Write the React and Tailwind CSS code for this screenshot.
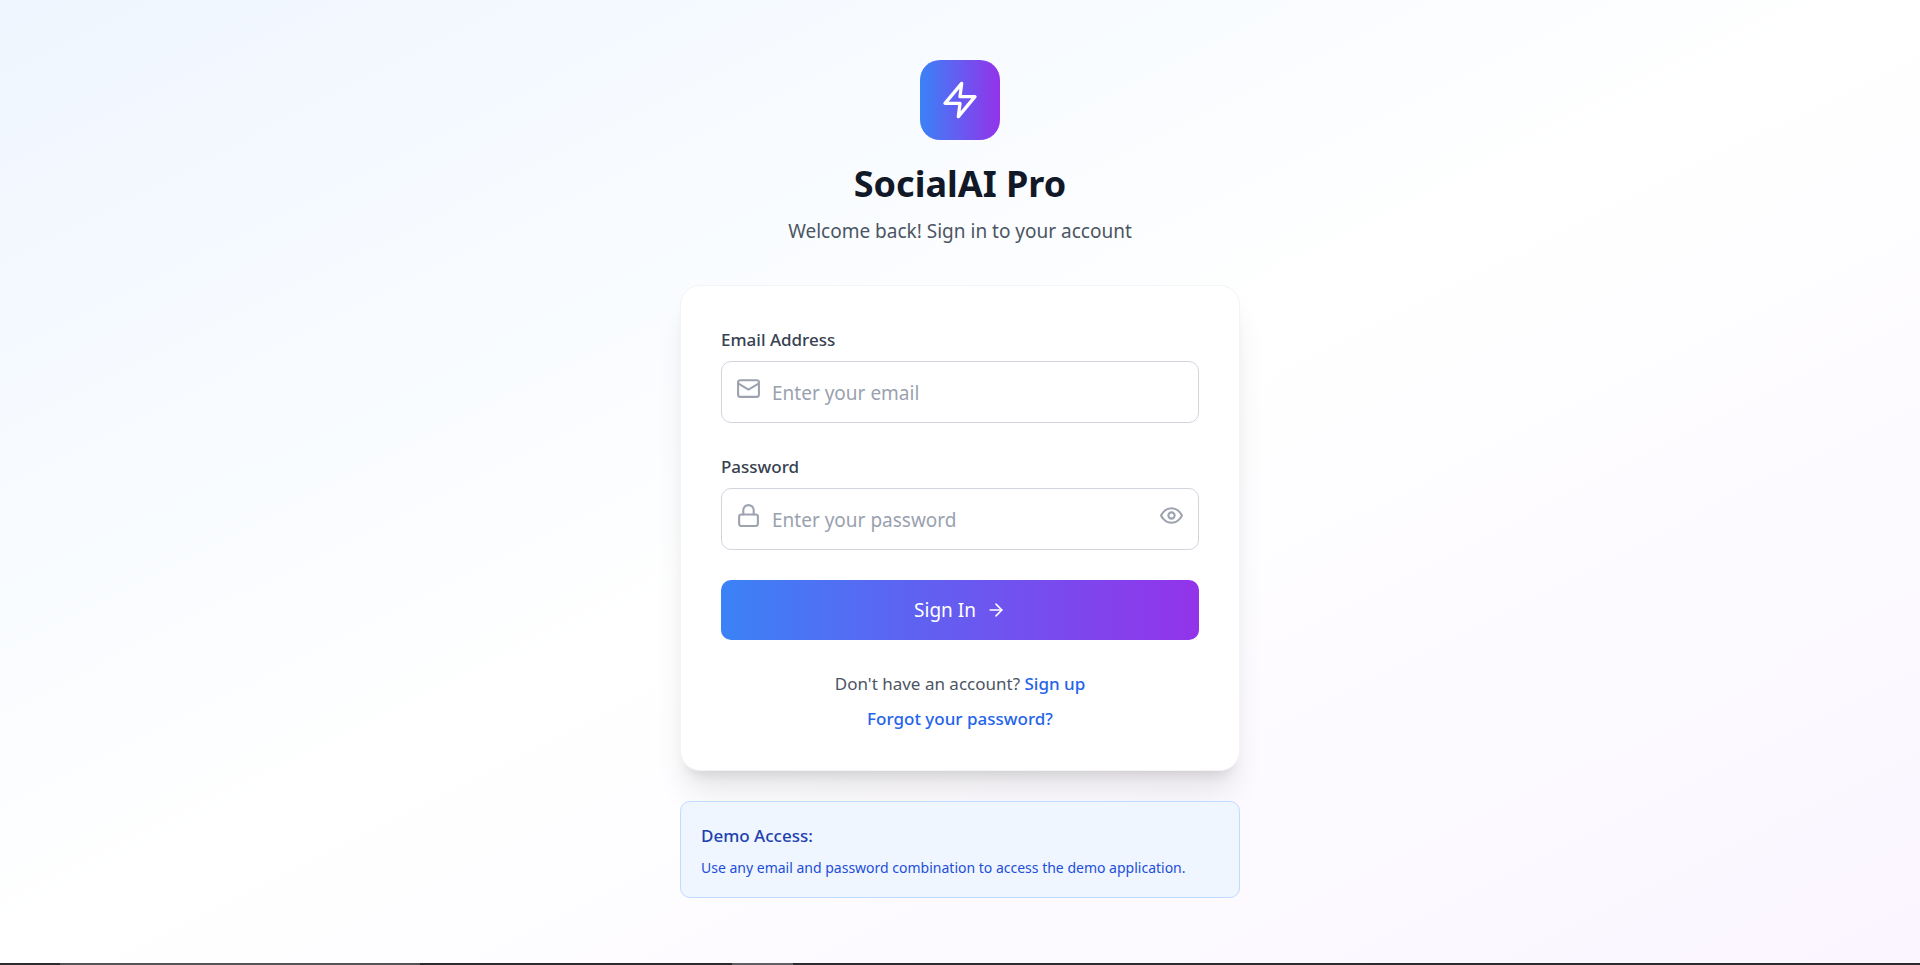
import { useState } from 'react'

const LABEL = 'block text-[17px] leading-[27px] font-medium text-[#374151] mb-2'
const FIELD =
  'block w-full h-[62px] border border-gray-300 rounded-[10px] pl-[50px] pt-[2px] text-[19px] text-gray-900 placeholder-gray-400 bg-white focus:outline-none focus:ring-2 focus:ring-blue-500'

function Icon({ className, children }) {
  return (
    <svg className={className} viewBox="0 0 24 24" fill="none" stroke="currentColor"
      strokeWidth="2" strokeLinecap="round" strokeLinejoin="round" aria-hidden="true">
      {children}
    </svg>
  )
}

export default function App() {
  const [form, setForm] = useState({ email: '', password: '' })
  const [showPassword, setShowPassword] = useState(false)

  const handleChange = (e) => setForm((f) => ({ ...f, [e.target.name]: e.target.value }))

  return (
    <div className="min-h-screen flex flex-col font-['Noto_Sans','Open_Sans',sans-serif]">
      <main className="flex-1 flex justify-center px-5 pt-15 pb-10 bg-linear-to-br/srgb from-[#eff6ff] via-white to-[#faf5ff]">
        <div className="w-full max-w-[560px]">
          {/* Header */}
          <header className="text-center mb-[38px]">
            <div className="size-20 mx-auto mb-5 flex items-center justify-center rounded-[20px] text-white bg-linear-to-r/srgb from-[#3b82f6] to-[#9333ea]">
              <Icon className="size-10">
                <polygon points="13 2 3 14 12 14 11 22 21 10 12 10 13 2" />
              </Icon>
            </div>
            <h1 className="text-[36px] leading-[48px] font-bold text-[#111827] mb-[7px]">SocialAI Pro</h1>
            <p className="text-[19px] leading-[32px] text-[#4b5563]">Welcome back! Sign in to your account</p>
          </header>

          {/* Card */}
          <div className="bg-white border border-[#f3f4f6] rounded-[20px] px-10 pt-10 pb-[38px] shadow-[0_25px_31px_-6px_rgba(0,0,0,0.1),0_10px_12px_-7px_rgba(0,0,0,0.1)]">
            <form onSubmit={(e) => e.preventDefault()} className="space-y-[30px]">
              <div>
                <label htmlFor="email" className={LABEL}>Email Address</label>
                <div className="relative">
                  <Icon className="absolute left-[15px] top-[15px] size-[25px] text-[#9ca3af]">
                    <rect x="2" y="4" width="20" height="16" rx="2" />
                    <path d="m22 7-10 6L2 7" />
                  </Icon>
                  <input id="email" name="email" type="email" value={form.email} onChange={handleChange}
                    placeholder="Enter your email" className={FIELD} />
                </div>
              </div>

              <div>
                <label htmlFor="password" className={LABEL}>Password</label>
                <div className="relative">
                  <Icon className="absolute left-[15px] top-[15px] size-[25px] text-[#9ca3af]">
                    <rect x="3" y="11" width="18" height="11" rx="2" />
                    <path d="M7 11V7a5 5 0 0 1 10 0v4" />
                  </Icon>
                  <input id="password" name="password" type={showPassword ? 'text' : 'password'}
                    value={form.password} onChange={handleChange}
                    placeholder="Enter your password" className={FIELD} />
                  <button type="button" onClick={() => setShowPassword((s) => !s)} aria-label="Toggle password"
                    className="absolute right-[15px] top-[15px] text-[#9ca3af] hover:text-gray-600">
                    <Icon className="size-[25px]">
                      <path d="M2 12s3-7 10-7 10 7 10 7-3 7-10 7-10-7-10-7Z" />
                      <circle cx="12" cy="12" r="3" />
                    </Icon>
                  </button>
                </div>
              </div>

              <button type="submit"
                className="w-full h-15 flex items-center justify-center gap-[10px] rounded-[10px] text-[19px] text-white bg-linear-to-r/srgb from-[#3b82f6] to-[#9333ea]">
                Sign In
                <Icon className="size-5">
                  <path d="M5 12h14" />
                  <path d="m12 5 7 7-7 7" />
                </Icon>
              </button>
            </form>

            <div className="mt-[30px] space-y-2 text-center text-[17px] leading-[27px]">
              <p className="text-[#4b5563]">
                Don't have an account?{' '}
                <a href="#signup" className="font-medium text-[#2563eb] hover:text-blue-700">Sign up</a>
              </p>
              <p>
                <a href="#forgot" className="font-medium text-[#2563eb] hover:text-blue-700">Forgot your password?</a>
              </p>
            </div>
          </div>

          {/* Demo notice */}
          <section className="mt-[30px] px-5 pt-5 pb-[18px] bg-[#eff6ff] border border-[#bfdbfe] rounded-[10px]">
            <h2 className="text-[17px] leading-[27px] font-medium text-[#1e40af] mb-2">Demo Access:</h2>
            <p className="text-[14px] leading-[22px] text-[#1d4ed8]">Use any email and password combination to access the demo application.</p>
          </section>
        </div>
      </main>

      {/* Taskbar edge */}
      <div className="h-[2px] flex bg-[#2d2a2d]">
        <div className="ml-[60px] w-[360px] bg-[#555255]" />
        <div className="ml-[312px] w-[61px] bg-[#625f62]" />
      </div>
    </div>
  )
}
